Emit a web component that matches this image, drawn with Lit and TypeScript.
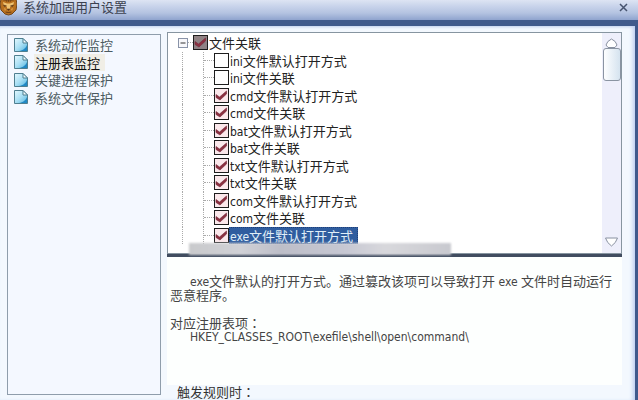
import { LitElement, html, css, svg } from "lit";
import { customElement, property, state } from "lit/decorators.js";

interface TreeEntry {
  ext: string;
  label: string;
  checked: boolean;
}

const OPEN_MODE = "文件默认打开方式";
const ASSOCIATION = "文件关联";

const ENTRIES: TreeEntry[] = [
  { ext: "ini", label: OPEN_MODE, checked: false },
  { ext: "ini", label: ASSOCIATION, checked: false },
  { ext: "cmd", label: OPEN_MODE, checked: true },
  { ext: "cmd", label: ASSOCIATION, checked: true },
  { ext: "bat", label: OPEN_MODE, checked: true },
  { ext: "bat", label: ASSOCIATION, checked: true },
  { ext: "txt", label: OPEN_MODE, checked: true },
  { ext: "txt", label: ASSOCIATION, checked: true },
  { ext: "com", label: OPEN_MODE, checked: true },
  { ext: "com", label: ASSOCIATION, checked: true },
  { ext: "exe", label: OPEN_MODE, checked: true },
];

const SECTIONS = ["系统动作监控", "注册表监控", "关键进程保护", "系统文件保护"];

const pageIcon = html`<svg class="page" viewBox="0 0 14 14" aria-hidden="true">
  <defs>
    <linearGradient id="sheet" x1="0" y1="0" x2="1" y2="1">
      <stop offset="0" stop-color="#e4f8fe" />
      <stop offset="0.5" stop-color="#a9dff4" />
      <stop offset="1" stop-color="#4fb4de" />
    </linearGradient>
  </defs>
  <path d="M.5.5h8.500l4.500 4.500v8.500H.5z" fill="url(#sheet)" stroke="#4f7f90" />
  <path d="M9 .5V5h4.500z" fill="#f4fdff" stroke="#4f7f90" />
  <path d="M5 13c4-.5 7-3 8-6v6z" fill="#2188c4" />
</svg>`;

const tick = svg`<path d="M2 6.500l3.500 2.500L12.500 3v3L6 12 2 9.500z" fill="#8c3040" stroke="#74283a" stroke-width=".6" />`;

@customElement("check-item")
export class CheckItem extends LitElement {
  @property() ext = "";
  @property() label = "";
  @property({ type: Boolean }) checked = false;
  @property({ type: Boolean }) root = false;
  @property({ type: Boolean }) selected = false;

  static styles = css`
    :host {
      display: block;
    }
    .item {
      display: flex;
      align-items: center;
      height: 100%;
    }
    .tick-box {
      display: grid;
      flex: none;
      width: 15px;
      height: 15px;
    }
    .tick-box > * {
      grid-area: 1 / 1;
    }
    input {
      appearance: none;
      margin: 0;
      width: 15px;
      height: 15px;
      box-sizing: border-box;
      border: 1px solid #1d1d1d;
      background: #fff;
    }
    input:checked {
      background: #fbe8eb;
    }
    .root input {
      background: #8f8284;
    }
    svg {
      width: 15px;
      height: 15px;
      pointer-events: none;
    }
    .text {
      padding: 0 5px 0 1px;
      line-height: 17px;
      white-space: nowrap;
    }
    .latin {
      font: 12px/1px "DejaVu Sans Condensed", "Noto Sans", sans-serif;
    }
    .selected .text {
      background: #2f5d9f;
      color: #e0eff8;
      outline: 1px dotted #1f3f78;
      outline-offset: -1px;
    }
  `;

  render() {
    const cls = `item ${this.root ? "root" : ""} ${this.selected ? "selected" : ""}`;
    return html`<label class=${cls}>
      <span class="tick-box">
        <input
          type="checkbox"
          .checked=${this.checked}
          @change=${(e: Event) => (this.checked = (e.target as HTMLInputElement).checked)}
        />
        ${this.checked ? html`<svg viewBox="0 0 15 15" aria-hidden="true">${tick}</svg>` : ""}
      </span>
      <span class="text"><span class="latin">${this.ext}</span>${this.label}</span>
    </label>`;
  }
}

@customElement("app-root")
export class AppRoot extends LitElement {
  @state() private section = 1;
  @state() private open = true;

  static styles = css`
    :host {
      display: flex;
      flex-direction: column;
      box-sizing: border-box;
      height: 100vh;
      overflow: hidden;
      font: 13px/14px "Noto Sans CJK SC", sans-serif;
      color: #222;
      background: #f5f9ff;
    }
    button {
      margin: 0;
      padding: 0;
      border: 0;
      background: none;
      font: inherit;
      color: inherit;
    }
    header {
      display: flex;
      flex: none;
      align-items: center;
      height: 14px;
      padding: 0 10px 6px 0;
      background: linear-gradient(#dde4f3, #c9d4eb 30%, #b4c3e1 65%, #8fa4ce);
      border-bottom: 6px solid #405b8c;
    }
    .logo {
      width: 17px;
      height: 17px;
      flex: none;
    }
    h1 {
      flex: 1;
      margin: 0 0 0 6px;
      font-size: 13px;
      font-weight: 400;
      color: #3c4250;
    }
    .close {
      display: flex;
    }
    .close svg {
      width: 9px;
      height: 9px;
    }
    .frame {
      display: flex;
      flex: 1;
      gap: 6px;
      min-height: 0;
      padding: 6px 13px 0 7px;
      border-right: 3px solid #3f5a8c;
      background: #f3f8fe;
      box-shadow: inset -4px 0 4px -2px #b9cdf0, inset 0 3px 3px -2px #c3d2ee;
    }
    nav {
      flex: none;
      box-sizing: border-box;
      width: 154px;
      margin: 2px 0 5px;
      padding: 1px 0 0 6px;
      border: 1px solid #8f9dab;
      background: #f4f8ff;
    }
    nav ul {
      display: grid;
      grid-auto-rows: 1fr;
      height: 70px;
    }
    ul {
      margin: 0;
      padding: 0;
      list-style: none;
    }
    .section {
      display: flex;
      align-items: center;
      gap: 6px;
      height: 100%;
      color: #4b5a60;
    }
    .section .name {
      padding: 0 5px 0 1px;
      line-height: 17px;
    }
    .section.current {
      color: #111;
    }
    .section.current .name {
      background: #f0eee6;
    }
    .page {
      width: 14px;
      height: 14px;
    }
    main {
      display: flex;
      flex: 1;
      flex-direction: column;
      min-width: 0;
    }
    .tree {
      position: relative;
      display: flex;
      flex: none;
      justify-content: space-between;
      border: 1px solid #8795a0;
      background: #fff;
      box-shadow: 0 3px 0 #414d60;
      margin-bottom: 3px;
    }
    .branches {
      display: grid;
      grid-template-columns: 10px 15px 1fr;
      grid-auto-rows: 1fr;
      height: 210px;
      padding: 1px 0 9px 10px;
    }
    .row {
      display: grid;
      grid-column: 1 / -1;
      grid-template-columns: subgrid;
      align-items: stretch;
    }
    .toggle {
      align-self: center;
      width: 10px;
      height: 10px;
    }
    .toggle svg {
      display: block;
      width: 10px;
      height: 10px;
    }
    .rail {
      margin-left: 4px;
      border-left: 1px dotted #aaa;
    }
    .stub {
      align-self: center;
      width: 5px;
      border-top: 1px dotted #aaa;
    }
    .root-item {
      margin-left: -10px;
    }
    .leaf {
      display: flex;
      border-left: 1px dotted #aaa;
    }
    .leaf::before {
      content: "";
      align-self: center;
      width: 10px;
      border-top: 1px dotted #aaa;
    }
    .scroll {
      display: flex;
      flex-direction: column;
      align-items: center;
      width: 19px;
      padding: 5px 0 6px;
      background: #eeeffb;
    }
    .scroll button {
      display: flex;
    }
    .scroll svg {
      width: 13px;
      height: 10px;
    }
    .thumb {
      flex: none;
      box-sizing: border-box;
      width: 18px;
      height: 33px;
      margin-bottom: auto;
      border: 1px solid #8a94a2;
      border-radius: 3px;
      background: linear-gradient(90deg, #fdfeff, #d5e3ef);
    }
    .smear {
      position: absolute;
      left: 21px;
      bottom: -2px;
      width: 262px;
      height: 12px;
      background: linear-gradient(90deg, #c9cacc, #d0d1d6 20%, #bdbec8 35%, #c7c8d3 60%, #d8d8dc 75%, #c8c9cf);
      filter: blur(1px);
    }
    .detail {
      flex: none;
      box-sizing: border-box;
      height: 128px;
      padding: 17px 4px 0 3px;
      background: #fdfffe;
      color: #444;
    }
    .detail .latin {
      font: 12px/1px "DejaVu Sans Condensed", "Noto Sans", sans-serif;
    }
    .colon {
      font-family: "Noto Sans CJK TC", sans-serif;
    }
    p {
      margin: 0;
    }
    .about {
      text-indent: 20px;
      margin-bottom: 14px;
    }
    .detail .key {
      padding-left: 20px;
      font: 12px/15px "DejaVu Sans Condensed", "Noto Sans", sans-serif;
    }
    .trigger {
      padding-left: 10px;
      color: #333;
    }
  `;

  private renderTree() {
    return html`<ul class="branches">
      <li class="row">
        <button class="toggle" aria-label="文件关联" @click=${() => (this.open = !this.open)}>
          <svg viewBox="0 0 10 10">
            <rect x=".5" y=".5" width="9" height="9" fill="#f7f7fa" stroke="#8993a8" />
            <path d="M2.500 5h5${this.open ? "" : "M5 2.500v5"}" stroke="#333" />
          </svg>
        </button>
        <span class="stub"></span>
        <check-item class="root-item" root checked label="文件关联"></check-item>
      </li>
      ${this.open
        ? ENTRIES.map(
            (e, i) => html`<li class="row">
              <span class="rail"></span>
              <span></span>
              <div class="leaf">
                <check-item
                  .ext=${e.ext}
                  .label=${e.label}
                  .checked=${e.checked}
                  ?selected=${i === ENTRIES.length - 1}
                ></check-item>
              </div>
            </li>`
          )
        : ""}
    </ul>`;
  }

  render() {
    return html`
      <header>
        <svg class="logo" viewBox="0 0 17 17" aria-hidden="true">
          <path d="M1 0L4 1h9l3-1 1 5-1 6-4 4-3.500 1L5 15l-4-4-1-6z" fill="#b8701f" stroke="#71451b" />
          <path d="M3 3l4 1.500h3L14 3l-1 4-3 1v3H7V8L4 7z" fill="#efc373" />
          <path d="M4 9l2 1-1 2zM13 9l-2 1 1 2z" fill="#e0a552" />
          <path d="M3.500 6l3 1-2 .5zM13.500 6l-3 1 2 .5zM7 10h3l-1.500 1.500zM5.500 13q3 1 6 0M8.500 1v2M6 1l1 2M11 1l-1 2" fill="#5c3413" stroke="#5c3413" stroke-width=".6" />
        </svg>
        <h1>系统加固用户设置</h1>
        <button class="close" aria-label="关闭">
          <svg viewBox="0 0 9 9"><path d="M1 1l7 7M8 1L1 8" stroke="#46536e" stroke-width="1.500" /></svg>
        </button>
      </header>
      <div class="frame">
        <nav>
          <ul>
            ${SECTIONS.map(
              (name, i) => html`<li>
                <button class="section ${i === this.section ? "current" : ""}" @click=${() => (this.section = i)}>
                  ${pageIcon}<span class="name">${name}</span>
                </button>
              </li>`
            )}
          </ul>
        </nav>
        <main>
          <section class="tree">
            ${this.renderTree()}
            <div class="scroll">
              <button aria-label="向上">
                <svg viewBox="0 0 13 10"><path d="M1 7Q2 3 6.500 1 11 3 12 7l-2 2.500H3z" fill="#fff" stroke="#8890a0" /></svg>
              </button>
              <div class="thumb"></div>
              <button aria-label="向下">
                <svg viewBox="0 0 13 10"><path d="M.5 1h12Q11 6 6.500 9 2 6 .5 1z" fill="#fff" stroke="#8890a0" /></svg>
              </button>
            </div>
            <div class="smear"></div>
          </section>
          <section class="detail">
            <p class="about"><span class="latin">exe</span>文件默认的打开方式。通过篡改该项可以导致打开<span class="latin"> exe </span>文件时自动运行恶意程序。</p>
            <p>对应注册表项<span class="colon">：</span></p>
            <p class="key">HKEY_CLASSES_ROOT\\exefile\\shell\\open\\command\\</p>
          </section>
          <p class="trigger">触发规则时<span class="colon">：</span></p>
        </main>
      </div>
    `;
  }
}
